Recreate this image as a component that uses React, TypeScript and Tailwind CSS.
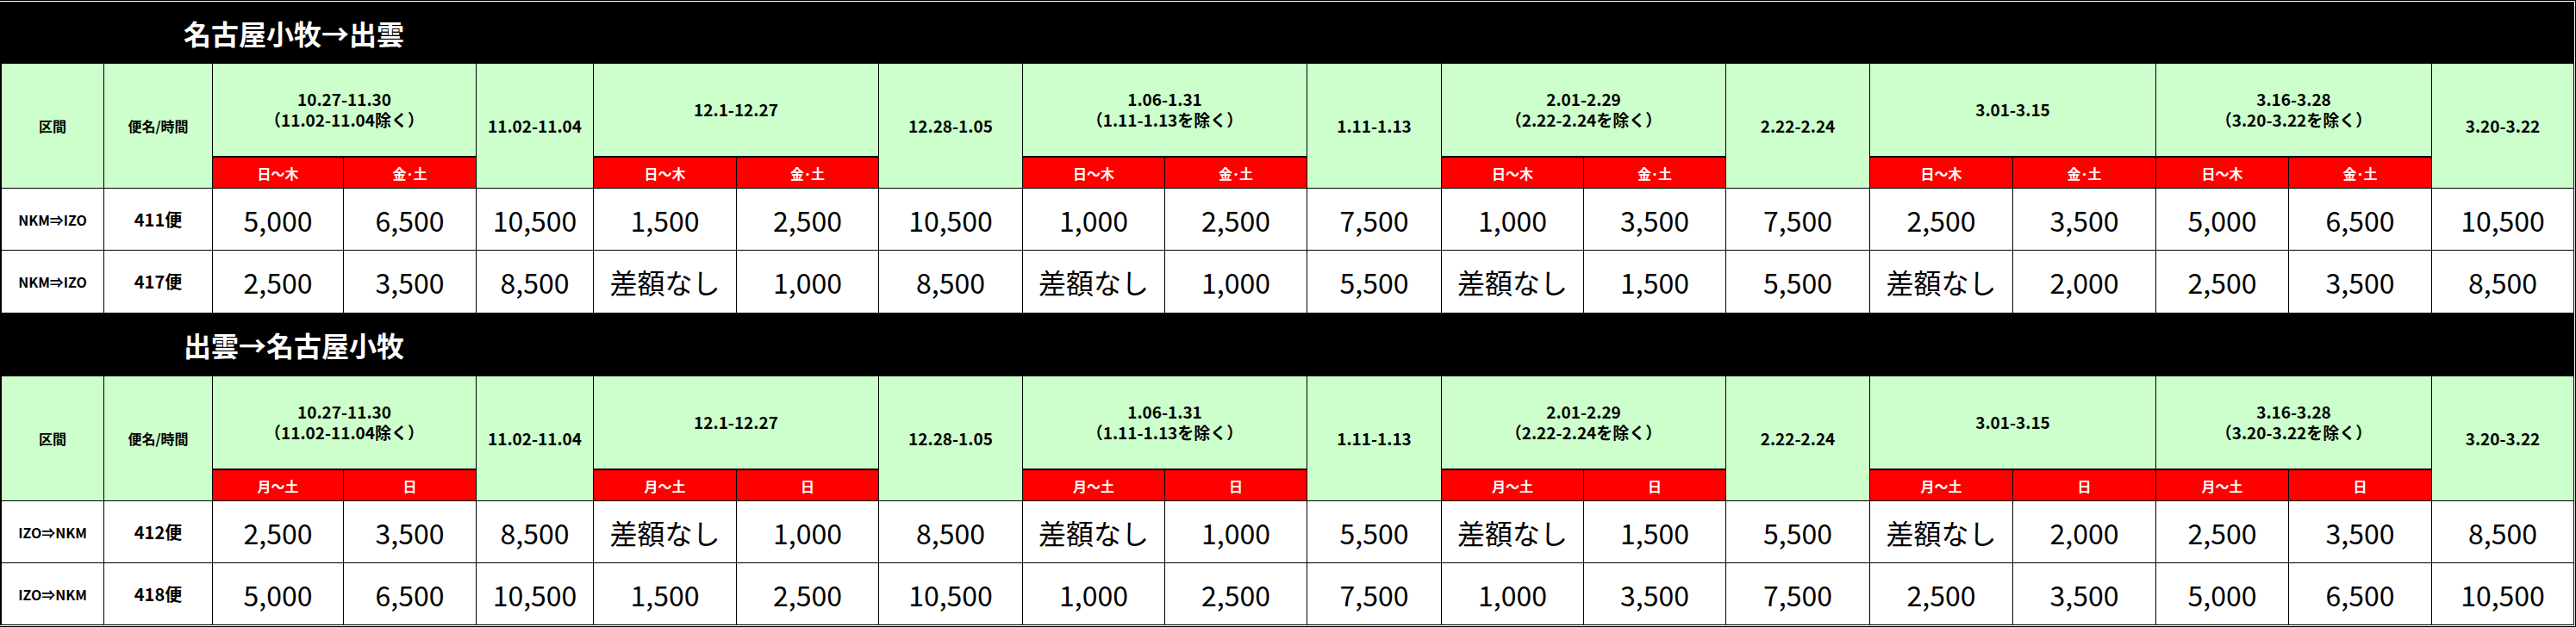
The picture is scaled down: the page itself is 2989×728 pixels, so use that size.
import React from 'react'

type Group = { label: string[]; split: boolean }

const groups: Group[] = [
  { label: ['10.27-11.30', '（11.02-11.04除く）'], split: true },
  { label: ['11.02-11.04'], split: false },
  { label: ['12.1-12.27'], split: true },
  { label: ['12.28-1.05'], split: false },
  { label: ['1.06-1.31', '（1.11-1.13を除く）'], split: true },
  { label: ['1.11-1.13'], split: false },
  { label: ['2.01-2.29', '（2.22-2.24を除く）'], split: true },
  { label: ['2.22-2.24'], split: false },
  { label: ['3.01-3.15'], split: true },
  { label: ['3.16-3.28', '（3.20-3.22を除く）'], split: true },
  { label: ['3.20-3.22'], split: false },
]

const rowA = ['5,000', '6,500', '10,500', '1,500', '2,500', '10,500', '1,000', '2,500', '7,500', '1,000', '3,500', '7,500', '2,500', '3,500', '5,000', '6,500', '10,500']
const rowB = ['2,500', '3,500', '8,500', '差額なし', '1,000', '8,500', '差額なし', '1,000', '5,500', '差額なし', '1,500', '5,500', '差額なし', '2,000', '2,500', '3,500', '8,500']

const font = { fontFamily: '"Noto Sans CJK JP", "Liberation Sans", sans-serif' }

function FareTable({
  days,
  rows,
  last,
}: {
  days: [string, string]
  rows: { route: string; flight: string; fares: string[] }[]
  last?: boolean
}) {
  // start column for each group (after 区間 and 便名/時間)
  let col = 3
  const placed = groups.map((g) => {
    const start = col
    col += g.split ? 2 : 1
    return { ...g, start }
  })

  return (
    <div
      className={`grid bg-black gap-px pt-px pr-px ${last ? 'pb-px grid-rows-[107px_36px_71px_71px]' : 'grid-rows-[107px_36px_71px_72px]'} grid-cols-[118px_125px_151px_153px_135px_165px_164px_166px_164px_164px_155px_164px_164px_166px_165px_165px_153px_165px_164px]`}
    >
      <div className="row-span-2 col-start-1 row-start-1 bg-[#ccffcc] flex items-center justify-center text-[16px] font-bold text-black">
        区間
      </div>
      <div className="row-span-2 col-start-2 row-start-1 bg-[#ccffcc] flex items-center justify-center text-[16px] font-bold text-black">
        便名/時間
      </div>
      {placed.map((g) =>
        g.split ? (
          <React.Fragment key={g.start}>
            <div
              className="col-span-2 row-start-1 bg-[#ccffcc] flex flex-col items-center justify-center text-[19px] leading-[24px] font-bold text-black pb-[2px]"
              style={{ gridColumnStart: g.start }}
            >
              {g.label.map((l) => (
                <span key={l}>{l}</span>
              ))}
            </div>
            <div
              className="row-start-2 bg-[#ff0000] border-t border-black flex items-center justify-center text-[16px] font-bold text-white"
              style={{ gridColumnStart: g.start }}
            >
              {days[0]}
            </div>
            <div
              className="row-start-2 bg-[#ff0000] border-t border-black flex items-center justify-center text-[16px] font-bold text-white"
              style={{ gridColumnStart: g.start + 1 }}
            >
              {days[1]}
            </div>
          </React.Fragment>
        ) : (
          <div
            key={g.start}
            className="row-span-2 row-start-1 bg-[#ccffcc] flex items-center justify-center text-[19px] font-bold text-black"
            style={{ gridColumnStart: g.start }}
          >
            {g.label[0]}
          </div>
        )
      )}
      {rows.map((r) => (
        <React.Fragment key={r.flight}>
          <div className="bg-white flex items-center justify-center text-[16px] font-bold text-black">{r.route}</div>
          <div className="bg-white flex items-center justify-center text-[20px] font-bold text-black">{r.flight}</div>
          {r.fares.map((f, i) => (
            <div key={i} className="bg-white flex items-center justify-center text-[32px] text-black">
              {f}
            </div>
          ))}
        </React.Fragment>
      ))}
    </div>
  )
}

function Title({ text, tall }: { text: string; tall?: boolean }) {
  return (
    <div className={`${tall ? 'h-[73px]' : 'h-[71px]'} bg-black flex items-center pl-[211px] text-white text-[32px] font-bold`}>
      {text}
    </div>
  )
}

export default function App() {
  return (
    <main className="w-[2989px] h-[728px] bg-black pt-px pr-px pb-px overflow-hidden" style={font}>
      <div className="h-full border-t border-r border-b border-white bg-black pl-[2px] flex flex-col">
        <Title text="名古屋小牧→出雲" />
        <FareTable
          days={['日～木', '金･土']}
          rows={[
            { route: 'NKM⇒IZO', flight: '411便', fares: rowA },
            { route: 'NKM⇒IZO', flight: '417便', fares: rowB },
          ]}
        />
        <Title text="出雲→名古屋小牧" tall />
        <FareTable
          days={['月～土', '日']}
          rows={[
            { route: 'IZO⇒NKM', flight: '412便', fares: rowB },
            { route: 'IZO⇒NKM', flight: '418便', fares: rowA },
          ]}
          last
        />
      </div>
    </main>
  )
}
